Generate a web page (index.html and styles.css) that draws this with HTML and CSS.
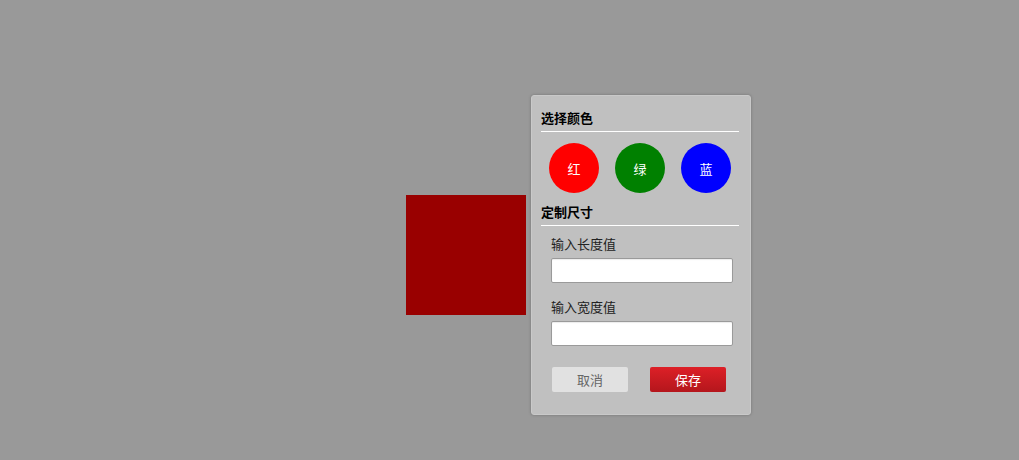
FILE: index.html
```html
<!DOCTYPE html>
<html lang="zh-CN">
<head>
<meta charset="utf-8">
<title>定制</title>
<link rel="stylesheet" href="styles.css">
</head>
<body>
<div class="stage">
  <div class="preview"></div>
  <div class="panel">
    <h3 class="panel-title">选择颜色</h3>
    <div class="swatches">
      <button class="swatch swatch-red">红</button>
      <button class="swatch swatch-green">绿</button>
      <button class="swatch swatch-blue">蓝</button>
    </div>
    <h3 class="panel-title title-size">定制尺寸</h3>
    <div class="fields">
      <label class="field-label">输入长度值</label>
      <input class="field-input" type="text">
      <label class="field-label label-second">输入宽度值</label>
      <input class="field-input" type="text">
      <div class="actions">
        <button class="btn btn-cancel">取消</button>
        <button class="btn btn-save">保存</button>
      </div>
    </div>
  </div>
</div>
</body>
</html>
```
FILE: styles.css
```css
html, body {
  margin: 0;
  padding: 0;
  background: #999999;
  font-family: "Noto Sans CJK SC", "Noto Sans", sans-serif;
}
.stage {
  display: flex;
  align-items: flex-start;
  padding: 95px 0 0 406px;
  gap: 5px;
  height: 460px;
  box-sizing: border-box;
}
.preview {
  width: 120px;
  height: 120px;
  margin-top: 100px;
  background: #990000;
}
.panel {
  width: 220px;
  box-sizing: border-box;
  background: #c0c0c0;
  border: 1px solid #c9c9c9;
  border-radius: 3px;
  box-shadow: 0 0 3px rgba(0, 0, 0, 0.25);
  padding: 12px 11px 22px 9px;
}
.panel-title {
  margin: 0;
  font-size: 13px;
  line-height: 20px;
  font-weight: bold;
  color: #000;
  padding-bottom: 3px;
  border-bottom: 1px solid #ffffff;
}
.title-size {
  margin-top: 9px;
}
.swatches {
  display: flex;
  margin-top: 11px;
}
.swatch {
  width: 50px;
  height: 50px;
  margin: 0 8px;
  border: none;
  border-radius: 50%;
  color: #fff;
  font-family: inherit;
  font-size: 13px;
  padding: 0;
}
.swatch-red { background: #ff0000; }
.swatch-green { background: #008000; }
.swatch-blue { background: #0000ff; }
.fields {
  display: flex;
  flex-direction: column;
  padding: 0 6px 0 10px;
}
.field-label {
  margin-top: 8px;
  font-size: 13px;
  line-height: 20px;
  color: #222;
}
.label-second {
  margin-top: 14px;
}
.field-input {
  margin-top: 4px;
  width: 182px;
  height: 25px;
  box-sizing: border-box;
  border: 1px solid #9a9a9a;
  border-radius: 2px;
  background: #fff;
  box-shadow: inset 0 1px 1px rgba(0, 0, 0, 0.08);
}
.actions {
  display: flex;
  gap: 22px;
  margin-top: 21px;
  padding-left: 1px;
}
.btn {
  width: 76px;
  height: 25px;
  border: none;
  border-radius: 2px;
  font-family: inherit;
  font-size: 13px;
  font-weight: normal;
  padding: 0;
}
.btn-cancel {
  background: #e1e1e1;
  color: #666;
}
.btn-save {
  background: linear-gradient(#dd2027, #b4161c);
  color: #fff;
}
```
